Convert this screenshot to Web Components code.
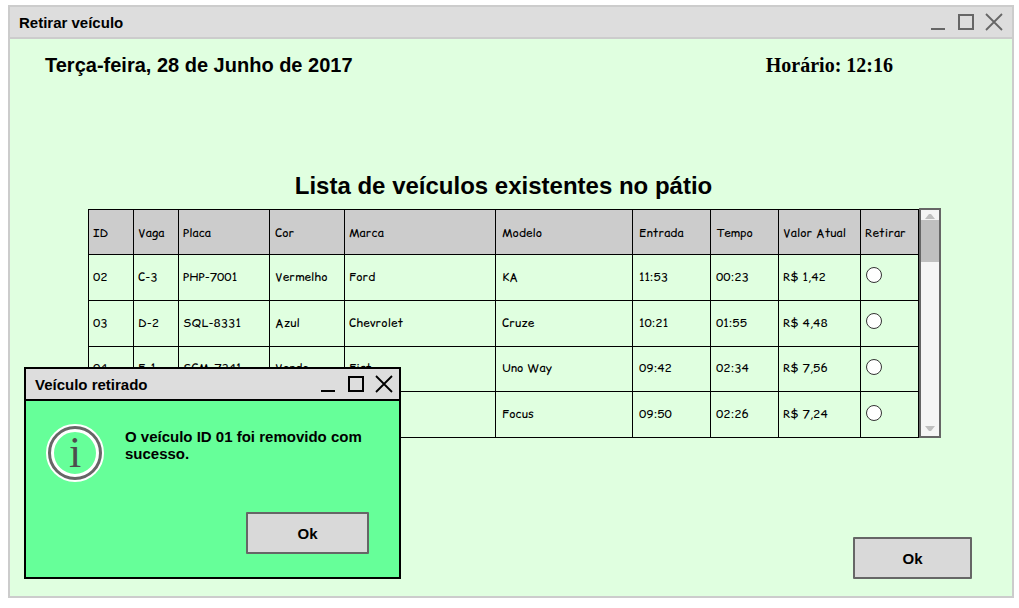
<!DOCTYPE html>
<html lang="pt-BR">
<head>
<meta charset="utf-8">
<title>Retirar veículo</title>
<style>
body { margin: 0; padding: 5px 5px 10px 8px; background: #fff; color: #000; font-family: "Liberation Sans", Arial, sans-serif; }
</style>
</head>
<body>
<retirar-page></retirar-page>

<script>
const define = (name, html, setup) => {
  const template = document.createElement('template');
  template.innerHTML = html;
  customElements.define(name, class extends HTMLElement {
    constructor() {
      super();
      this.attachShadow({ mode: 'open' }).append(template.content.cloneNode(true));
    }
    connectedCallback() { if (setup) setup(this.shadowRoot, this); }
  });
};

define('title-bar', `
<style>
:host { display: flex; align-items: center; justify-content: space-between; box-sizing: border-box; height: 32px; padding-left: 9px; background: #ddd; border-bottom: 2px solid var(--frame); }
.title { font-size: 15px; line-height: 18px; font-weight: bold; margin: 0; padding-top: 2px; }
.controls { display: flex; padding-right: var(--controls-end); color: var(--icon); }
button { width: 28px; height: 28px; padding: 0; border: 0; background: none; color: inherit; display: grid; place-items: center; }
svg { display: block; width: 20px; height: 20px; fill: none; stroke: currentColor; stroke-width: 2; }
</style>
<h1 class="title"><slot></slot></h1>
<div class="controls">
  <button type="button" aria-label="Minimizar"><svg viewBox="0 0 20 20"><path d="M3 17H17"/></svg></button>
  <button type="button" aria-label="Maximizar"><svg viewBox="0 0 20 20"><path d="M3 3H17V17H3Z"/></svg></button>
  <button type="button" aria-label="Fechar"><svg viewBox="0 0 20 20"><path stroke-width="1.8" d="M2 2L18 18M18 2L2 18"/></svg></button>
</div>`);

define('ok-button', `
<style>
:host { display: block; }
button { box-sizing: border-box; width: 100%; height: 42px; padding: 2px 0 0; border: 2px solid #666; border-radius: 1px; background: #d9d9d9; color: #000; font: bold 15px/18px "Liberation Sans", Arial, sans-serif; }
</style>
<button type="button"><slot></slot></button>`);

define('list-scrollbar', `
<style>
:host { display: flex; flex-direction: column; align-items: center; box-sizing: border-box; width: 22px; border: 2px solid #666; background: #f5f5f5; }
.thumb { width: 100%; height: 42px; background: #bfbfbf; flex: none; }
.track { flex: 1; }
svg { display: block; width: 18px; height: 10px; fill: #bfbfbf; flex: none; }
</style>
<svg viewBox="0 0 18 10"><path d="M4 9L8 4H10L14 9Z"/></svg>
<div class="thumb"></div>
<div class="track"></div>
<svg viewBox="0 0 18 10"><path d="M4 0H14L10 5H8Z"/></svg>`);

define('vehicle-table', `
<style>
:host { display: block; }
table { width: 100%; height: 229px; table-layout: fixed; border-collapse: collapse; font: 12px/16px "Comic Relief", "Comic Sans MS", "Comic Neue", "Noto Sans", sans-serif; }
th, td { border: 1px solid #000; padding: 0 0 1px 5px; text-align: left; font-weight: normal; white-space: nowrap; }
th { background: #ccc; padding-top: 2px; }
thead tr { height: 45px; }
.wide { padding-left: 6px; }
.narrow { padding-left: 4px; }
input { appearance: none; display: block; box-sizing: border-box; width: 16px; height: 16px; margin: 0 0 3px; border: 1px solid #333; border-radius: 50%; background: #fff; }
input:checked { border-width: 5px; }
</style>
<table>
  <colgroup></colgroup>
  <thead><tr></tr></thead>
  <tbody></tbody>
</table>`, root => {
  const columns = [
    ['ID', 45, 'narrow'], ['Vaga', 45, 'narrow'], ['Placa', 91, 'narrow'], ['Cor', 75, ''], ['Marca', 151, 'narrow'],
    ['Modelo', 137, 'wide'], ['Entrada', 78, 'wide'], ['Tempo', 68, ''], ['Valor Atual', 82, 'narrow'], ['Retirar', 58, 'narrow']
  ];
  const vehicles = [
    ['02', 'C-3', 'PHP-7001', 'Vermelho', 'Ford', 'KA', '11:53', '00:23', 'R$ 1,42'],
    ['03', 'D-2', 'SQL-8331', 'Azul', 'Chevrolet', 'Cruze', '10:21', '01:55', 'R$ 4,48'],
    ['04', 'E-1', 'SCM-7341', 'Verde', 'Fiat', 'Uno Way', '09:42', '02:34', 'R$ 7,56'],
    ['05', 'E-2', 'PGA-1020', 'Preto', 'Ford', 'Focus', '09:50', '02:26', 'R$ 7,24']
  ];
  root.querySelector('colgroup').innerHTML = columns.map(c => `<col style="width:${c[1]}px">`).join('');
  root.querySelector('thead tr').innerHTML = columns.map(c => `<th scope="col" class="${c[2]}">${c[0]}</th>`).join('');
  root.querySelector('tbody').innerHTML = vehicles.map(v =>
    `<tr>${v.map((t, i) => `<td class="${columns[i][2]}">${t}</td>`).join('')}<td><input type="radio" name="retirar" aria-label="Retirar veículo ${v[0]}"></td></tr>`).join('');
});

define('message-dialog', `
<style>
:host { display: block; box-sizing: border-box; width: 377px; border: 2px solid #000; background: #6f9; --frame: #000; --icon: #000; --controls-end: 1px; }
.body { display: flex; flex-direction: column; justify-content: space-between; box-sizing: border-box; min-height: 176px; padding: 23px 30px 23px 20px; }
.message { display: flex; gap: 21px; }
.icon { flex: none; box-sizing: border-box; width: 58px; height: 58px; border: 2px solid #fff; border-radius: 50%; background: #fff; }
.ring { box-sizing: border-box; width: 54px; height: 54px; border: 3px solid #666; border-radius: 50%; background: #666; }
.inner { box-sizing: border-box; height: 48px; border: 3px solid #fff; border-radius: 50%; background: #6f9; text-align: center; color: #4d4d4d; font: 44px/42px "Liberation Serif", "Times New Roman", serif; }
p { margin: 4px 0 0; font-size: 15px; line-height: 17px; font-weight: bold; }
ok-button { width: 123px; align-self: flex-end; }
</style>
<title-bar><slot name="title"></slot></title-bar>
<div class="body">
  <div class="message">
    <div class="icon"><div class="ring"><div class="inner">i</div></div></div>
    <p><slot></slot></p>
  </div>
  <ok-button>Ok</ok-button>
</div>`);

define('retirar-page', `
<style>
:host { display: flex; flex-direction: column; position: relative; box-sizing: border-box; min-height: calc(100vh - 15px); border: 2px solid #ccc; background: #e0ffe0; --frame: #ccc; --icon: #666; --controls-end: 4px; }
main { flex: 1; display: flex; flex-direction: column; padding: 14px 40px 17px 35px; }
.info { display: flex; justify-content: space-between; padding-right: 79px; font-size: 20px; line-height: 24px; font-weight: bold; }
.time { font-family: "Liberation Serif", "Times New Roman", serif; }
.list { display: grid; grid-template-columns: 1fr 22px; padding: 95px 31px 0 43px; }
h2 { margin: 0 0 8px; grid-column: 1; font-size: 24px; line-height: 28px; text-align: center; }
vehicle-table { grid-column: 1; padding-top: 1px; }
main > ok-button { width: 119px; margin-top: auto; align-self: flex-end; }
message-dialog { position: absolute; left: 14px; bottom: 17px; }
</style>
<title-bar>Retirar veículo</title-bar>
<main>
  <div class="info"><span>Terça-feira, 28 de Junho de 2017</span><span class="time">Horário: 12:16</span></div>
  <section class="list">
    <h2>Lista de veículos existentes no pátio</h2>
    <vehicle-table></vehicle-table>
    <list-scrollbar></list-scrollbar>
  </section>
  <ok-button>Ok</ok-button>
</main>
<message-dialog role="dialog" aria-label="Veículo retirado"><span slot="title">Veículo retirado</span>O veículo ID 01 foi removido com sucesso.</message-dialog>`);
</script>
</body>
</html>
